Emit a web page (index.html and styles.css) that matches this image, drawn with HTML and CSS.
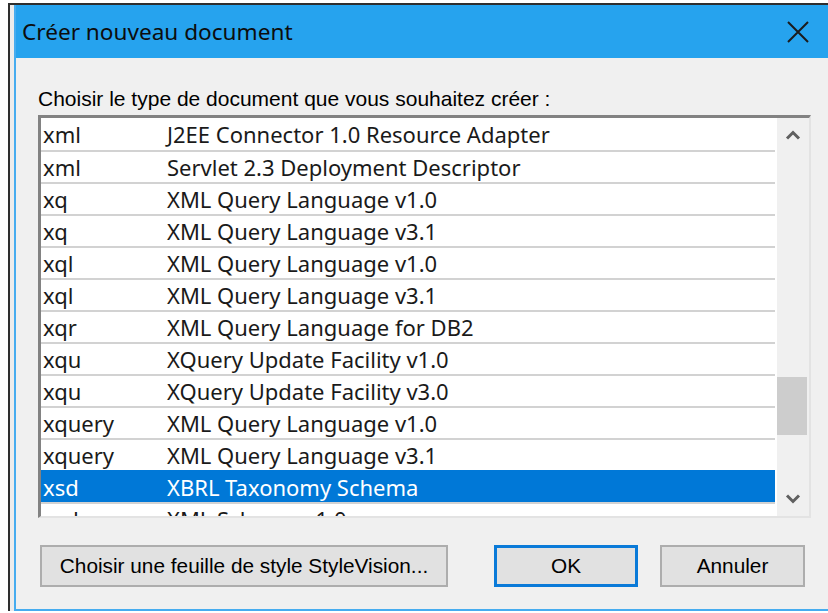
FILE: index.html
```html
<!DOCTYPE html>
<html lang="fr">
<head>
<meta charset="utf-8">
<title>Créer nouveau document</title>
<link rel="stylesheet" href="styles.css">
</head>
<body>
<div class="frame">
  <div class="dialog">
    <div class="titlebar">
      <span class="title">Créer nouveau document</span>
      <svg class="close" width="22" height="22" viewBox="0 0 22 22" aria-hidden="true">
        <path d="M1 1 L21 21 M21 1 L1 21" stroke="#1b1b1b" stroke-width="2" fill="none"/>
      </svg>
    </div>
    <div class="content">
      <div class="label">Choisir le type de document que vous souhaitez créer :</div>
      <div class="listbox">
        <div class="rows">
          <div class="row"><span class="ext">xml</span><span class="desc">J2EE Connector 1.0 Resource Adapter</span></div>
          <div class="row"><span class="ext">xml</span><span class="desc">Servlet 2.3 Deployment Descriptor</span></div>
          <div class="row"><span class="ext">xq</span><span class="desc">XML Query Language v1.0</span></div>
          <div class="row"><span class="ext">xq</span><span class="desc">XML Query Language v3.1</span></div>
          <div class="row"><span class="ext">xql</span><span class="desc">XML Query Language v1.0</span></div>
          <div class="row"><span class="ext">xql</span><span class="desc">XML Query Language v3.1</span></div>
          <div class="row"><span class="ext">xqr</span><span class="desc">XML Query Language for DB2</span></div>
          <div class="row"><span class="ext">xqu</span><span class="desc">XQuery Update Facility v1.0</span></div>
          <div class="row"><span class="ext">xqu</span><span class="desc">XQuery Update Facility v3.0</span></div>
          <div class="row"><span class="ext">xquery</span><span class="desc">XML Query Language v1.0</span></div>
          <div class="row"><span class="ext">xquery</span><span class="desc">XML Query Language v3.1</span></div>
          <div class="row selected"><span class="ext">xsd</span><span class="desc">XBRL Taxonomy Schema</span></div>
          <div class="row"><span class="ext">xsd</span><span class="desc">XML Schema v1.0</span></div>
        </div>
        <div class="scrollbar">
          <div class="arrow">
            <svg width="16" height="10" viewBox="0 0 16 10" aria-hidden="true">
              <path d="M2 8.5 L8 2.5 L14 8.5" stroke="#606060" stroke-width="3" fill="none"/>
            </svg>
          </div>
          <div class="track">
            <div class="thumb"></div>
          </div>
          <div class="arrow">
            <svg width="16" height="10" viewBox="0 0 16 10" aria-hidden="true">
              <path d="M2 1.5 L8 7.5 L14 1.5" stroke="#606060" stroke-width="3" fill="none"/>
            </svg>
          </div>
        </div>
      </div>
      <div class="buttons">
        <button class="btn btn-style">Choisir une feuille de style StyleVision...</button>
        <button class="btn btn-ok">OK</button>
        <button class="btn btn-cancel">Annuler</button>
      </div>
    </div>
  </div>
</div>
</body>
</html>
```

FILE: styles.css
```css
html, body {
  margin: 0;
  padding: 0;
  background: #ffffff;
  overflow: hidden;
  width: 828px;
  height: 613px;
}

.frame {
  margin: 3px 0 0 8px;
  border-top: 2px solid #2e2e2e;
  border-left: 2px solid #2e2e2e;
  padding-left: 4px;
  background: #ececec;
  width: 840px;
}

.dialog {
  border-left: 2px solid #46acef;
  border-bottom: 2px solid #46acef;
  background: #f0f0f0;
  width: 830px;
  display: flex;
  flex-direction: column;
}

.titlebar {
  height: 53px;
  background: #26a3ee;
  display: flex;
  align-items: center;
  padding-left: 6px;
}

.title {
  font-family: "Noto Sans", "Open Sans", sans-serif;
  font-size: 22.6px;
  color: #0d0d0d;
  flex: 1;
}

.close {
  margin-right: 37px;
}

.content {
  display: flex;
  flex-direction: column;
  padding: 29px 0 22px 22px;
}

.label {
  font-family: "Liberation Sans", Arial, sans-serif;
  font-size: 21px;
  line-height: 24px;
  color: #000;
  margin-bottom: 4px;
  white-space: nowrap;
}

.listbox {
  width: 768px;
  height: 398px;
  display: flex;
  background: #fff;
  border-top: 3px solid #828282;
  border-left: 3px solid #828282;
  border-right: 2px solid #e3e3e3;
  border-bottom: 2px solid #e3e3e3;
  overflow: hidden;
}

.rows {
  flex: 1;
  overflow: hidden;
  margin-right: 2px;
}

.row {
  height: 30px;
  border-top: 2px solid #d2d2d2;
  display: flex;
  align-items: center;
  font-family: "Noto Sans", "Open Sans", sans-serif;
  font-size: 22px;
  color: #1a1a1a;
}

.row:first-child {
  height: 32px;
  border-top: 0;
}

.row.selected {
  background: #0078d7;
  border-top-color: #0078d7;
  color: #fff;
}

.ext {
  width: 124px;
  padding-left: 2px;
  flex: none;
}

.desc {
  white-space: nowrap;
}

.scrollbar {
  width: 32px;
  background: #f0f0f0;
  display: flex;
  flex-direction: column;
}

.arrow {
  height: 34px;
  display: flex;
  align-items: center;
  justify-content: center;
}

.track {
  flex: 1;
  position: relative;
}

.thumb {
  position: absolute;
  left: 0;
  width: 30px;
  top: 225px;
  height: 58px;
  background: #cdcdcd;
}

.buttons {
  display: flex;
  margin-top: 27px;
  padding-left: 2px;
}

.btn {
  height: 42px;
  background: #e1e1e1;
  border: 2px solid #adadad;
  font-family: "Liberation Sans", Arial, sans-serif;
  font-size: 20.8px;
  color: #000;
  padding: 0;
  margin: 0;
}

.btn-style {
  width: 408px;
}

.btn-ok {
  width: 144px;
  margin-left: 46px;
  border: 3px solid #0a7ad8;
}

.btn-cancel {
  width: 145px;
  margin-left: 22px;
}
```
